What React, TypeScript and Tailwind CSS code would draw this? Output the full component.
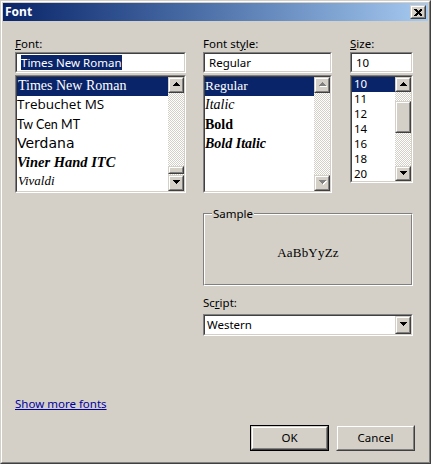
import React from "react";

const ui = "font-['Noto_Sans',sans-serif]";

function Sunken({ className = "", children }: { className?: string; children: React.ReactNode }) {
  return (
    <div className={`border border-t-[#808080] border-l-[#808080] border-r-white border-b-white ${className}`}>
      <div className="h-full w-full border border-t-[#404040] border-l-[#404040] border-r-[#d4d0c8] border-b-[#d4d0c8] bg-white overflow-hidden">
        {children}
      </div>
    </div>
  );
}

function Raised({ className = "", children }: { className?: string; children?: React.ReactNode }) {
  return (
    <div className={`border border-t-[#d4d0c8] border-l-[#d4d0c8] border-r-[#404040] border-b-[#404040] bg-[#d4d0c8] ${className}`}>
      <div className="h-full w-full border border-t-white border-l-white border-r-[#808080] border-b-[#808080] flex items-center justify-center">
        {children}
      </div>
    </div>
  );
}

function Arrow({ up = false, off = false }: { up?: boolean; off?: boolean }) {
  const points = up ? "4,0 0,4 8,4" : "0,0 8,0 4,4";
  return (
    <svg width="9" height="6" viewBox="0 0 9 6" shapeRendering="crispEdges">
      {off && <polygon points={points} fill="#fff" transform="translate(1 1)" />}
      <polygon points={points} fill={off ? "#808080" : "#000"} />
    </svg>
  );
}

const track = "bg-[repeating-conic-gradient(#d4d0c8_0_25%,#ffffff_0_50%)] bg-[length:2px_2px]";

function Row({ sel = false, className = "", children }: { sel?: boolean; className?: string; children: React.ReactNode }) {
  return (
    <div className={`flex items-center whitespace-nowrap pb-0.5 leading-[15px] ${sel ? "bg-[#0a246a] text-white" : "text-black"} ${className}`}>
      {children}
    </div>
  );
}

function Field({ label, value, selected = false }: { label: [string, string, string]; value: string; selected?: boolean }) {
  return (
    <div className="w-full">
      <div className="h-[15px] leading-[13px] text-[11.5px] text-black">
        {label[0]}<span className="underline">{label[1]}</span>{label[2]}
      </div>
      <Sunken className="h-[21px]">
        <div className="h-full flex items-center pl-1 text-[11.5px] text-black">
          {selected ? <span className="bg-[#0a246a] text-white leading-[15px]">{value}</span> : value}
        </div>
      </Sunken>
    </div>
  );
}

export default function App() {
  return (
    <div className={`w-[431px] h-[464px] border border-t-[#d4d0c8] border-l-[#d4d0c8] border-r-[#404040] border-b-[#404040] ${ui}`}>
      <div className="h-full border border-t-white border-l-white border-r-[#808080] border-b-[#808080] bg-[#d4d0c8] p-px flex flex-col">
        <div className="h-[18px] shrink-0 flex items-center justify-between pl-0.5 pr-0.5 bg-gradient-to-r from-[#0a246a] to-[#a6caf0]">
          <span className="text-[12px] font-bold text-white leading-none">Font</span>
          <Raised className="w-4 h-[14px]">
            <svg width="8" height="7" viewBox="0 0 8 7" shapeRendering="crispEdges">
              <path d="M0 0h2l2 2 2-2h2v1L5.5 3.5 8 6v1H6L4 5 2 7H0V6l2.5-2.5L0 1z" fill="#000" />
            </svg>
          </Raised>
        </div>

        <div className="flex-1 flex flex-col pt-4 pl-3 pr-[13px] pb-[10px]">
          <div className="flex">
            <div className="w-[171px]">
              <Field label={["", "F", "ont:"]} value="Times New Roman" selected />
              <Sunken className="h-[118px] mt-0.5">
                <div className="flex h-full">
                  <div className="flex-1 min-w-0 overflow-hidden">
                    <Row sel className="h-[19px] text-[14px] font-['Liberation_Serif',serif] pl-px">Times New Roman</Row>
                    <Row className="h-[19px] text-[13.5px] font-['Open_Sans',sans-serif]">Trebuchet MS</Row>
                    <Row className="h-5 text-[12.5px] font-['Lato',sans-serif]">Tw Cen MT</Row>
                    <Row className="h-[19px] text-[14px] font-['DejaVu_Sans',sans-serif]">Verdana</Row>
                    <Row className="h-[18px] text-[14.5px] font-['Liberation_Serif',serif] italic font-bold">Viner Hand ITC</Row>
                    <Row className="h-[19px] text-[13px] font-['Liberation_Serif',serif] italic pl-px">Vivaldi</Row>
                  </div>
                  <div className={`w-4 h-full shrink-0 flex flex-col ${track}`}>
                    <Raised className="w-4 h-4 shrink-0"><Arrow up /></Raised>
                    <div className="flex-1 flex flex-col justify-end">
                      <Raised className="w-4 h-2 mb-px" />
                    </div>
                    <Raised className="w-4 h-4 shrink-0"><Arrow /></Raised>
                  </div>
                </div>
              </Sunken>
            </div>

            <div className="ml-[17px] flex flex-col">
              <div className="flex">
                <div className="w-[129px]">
                  <Field label={["Font st", "y", "le:"]} value="Regular" />
                  <Sunken className="h-[118px] mt-0.5">
                    <div className="flex h-full font-['Liberation_Serif',serif] text-[14px]">
                      <div className="flex-1 min-w-0">
                        <Row sel className="h-[19px] text-[13.5px]">Regular</Row>
                        <Row className="h-[19px] italic">Italic</Row>
                        <Row className="h-[20px] font-bold">Bold</Row>
                        <Row className="h-[18px] font-bold italic">Bold Italic</Row>
                      </div>
                      <div className={`w-4 h-full shrink-0 flex flex-col justify-between ${track}`}>
                        <Raised className="w-4 h-4 shrink-0"><Arrow up off /></Raised>
                        <Raised className="w-4 h-4 shrink-0"><Arrow off /></Raised>
                      </div>
                    </div>
                  </Sunken>
                </div>
                <div className="w-[63px] ml-[18px]">
                  <Field label={["", "S", "ize:"]} value="10" />
                  <Sunken className="h-[108px] mt-0.5">
                    <div className="flex h-full text-[11.5px]">
                      <div className="flex-1 min-w-0">
                        {["10", "11", "12", "14", "16", "18", "20"].map((s, i) => (
                          <Row key={s} sel={i === 0} className="h-[15px] pl-[2px]">{s}</Row>
                        ))}
                      </div>
                      <div className={`w-4 h-full shrink-0 flex flex-col ${track}`}>
                        <Raised className="w-4 h-[15px] shrink-0"><Arrow up /></Raised>
                        <div className="flex-1 pt-[9px]">
                          <Raised className="w-4 h-8" />
                        </div>
                        <Raised className="w-4 h-[15px] shrink-0"><Arrow /></Raised>
                      </div>
                    </div>
                  </Sunken>
                </div>
              </div>

              <div className="relative mt-5 h-[73px] border border-t-[#808080] border-l-[#808080] border-r-white border-b-white">
                <div className="h-full border border-t-white border-l-white border-r-[#808080] border-b-[#808080] flex items-center justify-center pt-1.5">
                  <span className="font-['Liberation_Serif',serif] text-[13px] text-black tracking-[0.2px]">AaBbYyZz</span>
                </div>
                <span className="absolute left-2 -top-[7px] px-px bg-[#d4d0c8] text-[11.5px] leading-[13px] text-black">Sample</span>
              </div>

              <div className="mt-[10px] h-[18px] leading-[13px] text-[11.5px] text-black">
                Sc<span className="underline">r</span>ipt:
              </div>
              <Sunken className="h-[22px]">
                <div className="flex h-full items-center justify-between text-[11.5px] text-black pl-0.5">
                  <span className="-mt-px">Western</span>
                  <Raised className="w-4 h-full"><Arrow /></Raised>
                </div>
              </Sunken>
            </div>
          </div>

          <div className="mt-auto leading-[15px]">
            <span className="text-[11.5px] leading-[15px] text-[#0000a0] underline">Show more fonts</span>
          </div>
          <div className="mt-[14px] flex justify-end gap-[7px]">
            <div className="border border-black">
              <Raised className="w-[77px] h-6"><span className="text-[11.5px] text-black">OK</span></Raised>
            </div>
            <Raised className="w-[79px] h-[26px]"><span className="text-[11.5px] text-black">Cancel</span></Raised>
          </div>
        </div>
      </div>
    </div>
  );
}
